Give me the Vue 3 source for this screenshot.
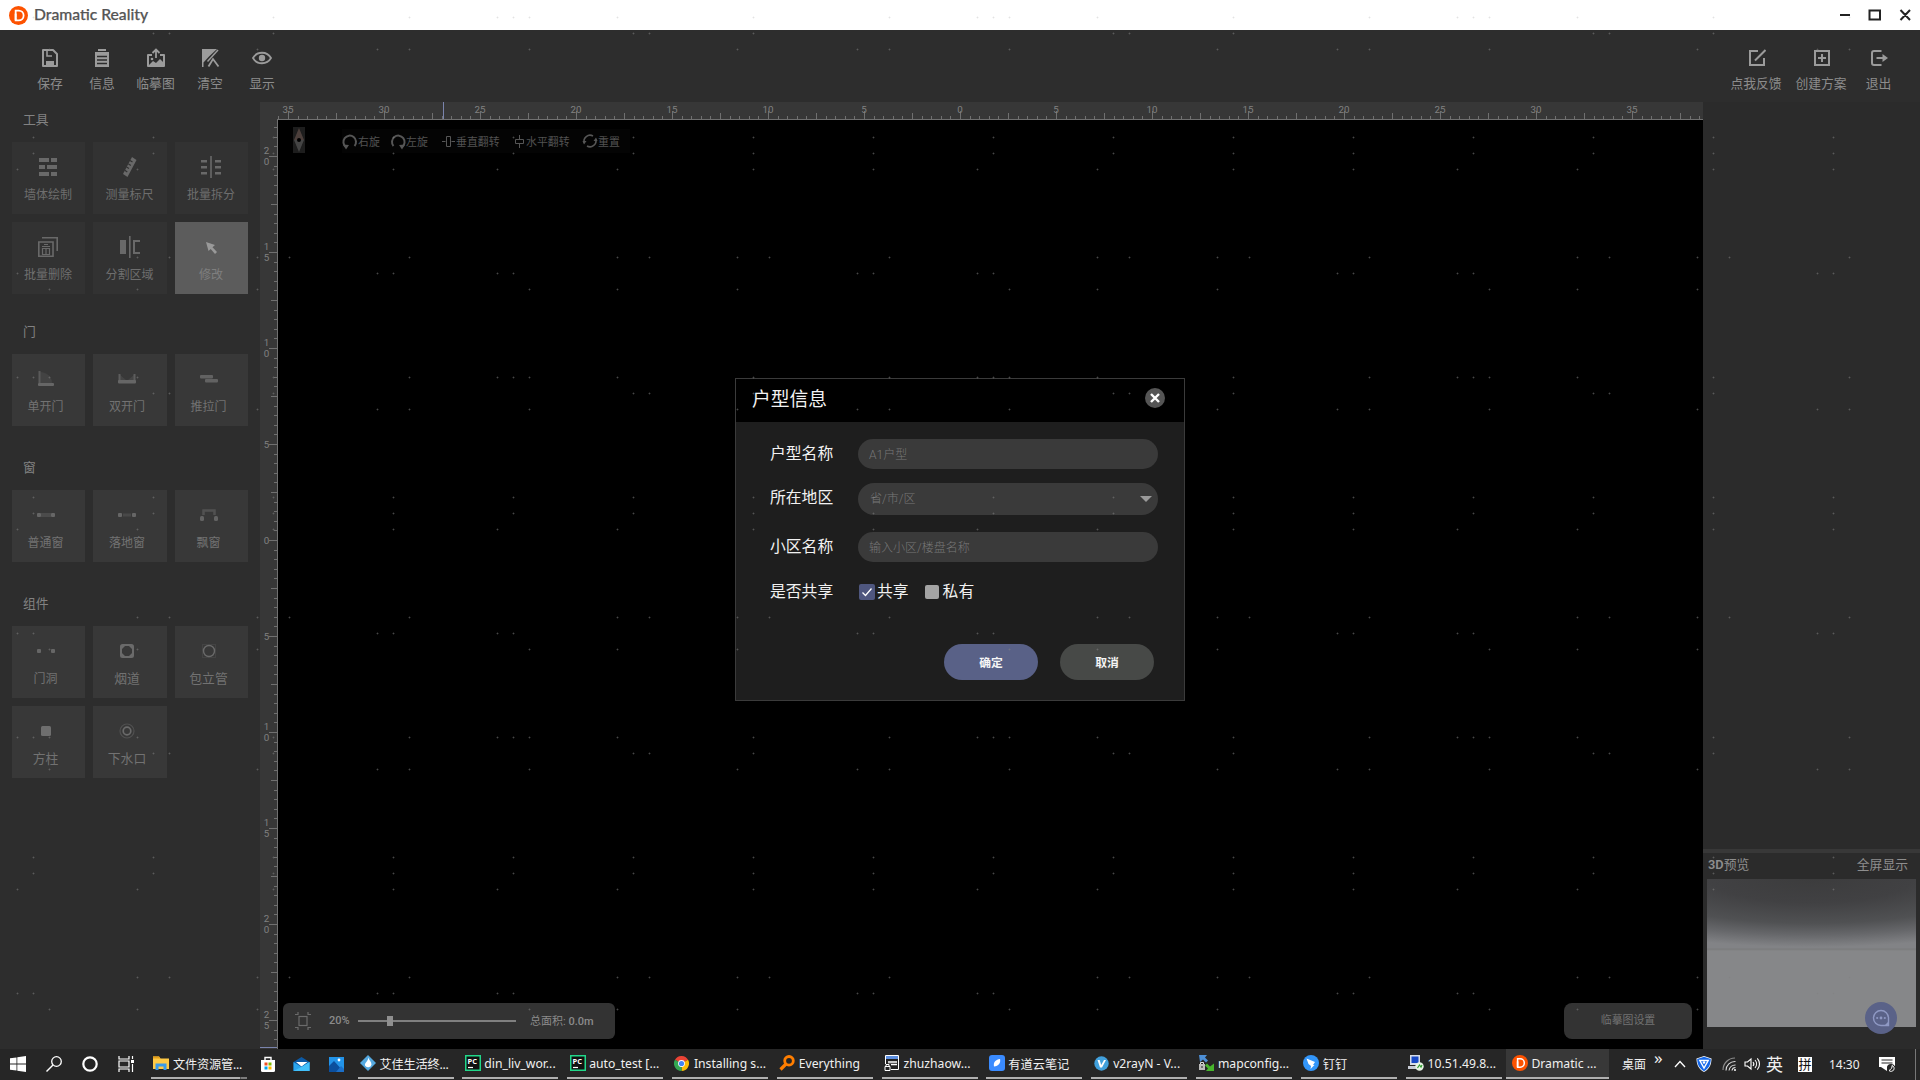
<script setup>
const svg = (w, h, body, vb) =>
  `<svg xmlns="http://www.w3.org/2000/svg" width="${w}" height="${h}" viewBox="${vb || `0 0 ${w} ${h}`}" style="display:block" fill="none">${body}</svg>`

const menuLeft = [
  { label: '保存', w: 52, icon: svg(20, 20, '<path d="M3 2h10l4 4v12H3z" stroke="#9b9b9b" stroke-width="2" stroke-linejoin="round"/><path d="M7 3v5h5" stroke="#9b9b9b" stroke-width="1.6"/><path d="M6 13h8v4H6z" fill="#9b9b9b"/>') },
  { label: '信息', w: 52, icon: svg(20, 20, '<path d="M6 1h8v2H6zM3 4h14v15H3z" fill="#9b9b9b"/><path d="M5 8.5h10M5 12h10M5 15.5h10" stroke="#2d2d2d" stroke-width="1.3"/>') },
  { label: '临摹图', w: 55, icon: svg(20, 20, '<path d="M6 7H2v11h16V7h-4" stroke="#9b9b9b" stroke-width="2" stroke-linejoin="round"/><path d="M10 10V2M6.500 5 10 1.500 13.500 5" stroke="#9b9b9b" stroke-width="1.800"/><path d="M3 17l4-4 3 2 4-4 4 4v3H3z" fill="#9b9b9b"/><circle cx="6" cy="11" r="1.300" fill="#9b9b9b"/>') },
  { label: '清空', w: 54, icon: svg(20, 20, '<path d="M2 1h15L9 8.500 3.500 14.500V19H2z" fill="#9b9b9b"/><path d="M18 2 7.500 13.500" stroke="#9b9b9b" stroke-width="1.500"/><path d="M8.500 18.500 13 11l5.500 7.500" stroke="#9b9b9b" stroke-width="1.800"/>') },
  { label: '显示', w: 50, icon: svg(22, 20, '<path d="M2 10C6 3 16 3 20 10C16 17 6 17 2 10z" stroke="#9b9b9b" stroke-width="1.800"/><circle cx="11" cy="10" r="3.200" fill="#9b9b9b"/>') }
]
const menuRight = [
  { label: '点我反馈', w: 62, icon: svg(20, 20, '<path d="M12 3H4v14h14v-7" stroke="#9b9b9b" stroke-width="2"/><path d="M9 12.500 19.500 2" stroke="#9b9b9b" stroke-width="2"/>') },
  { label: '创建方案', w: 68, icon: svg(20, 20, '<path d="M4 3h14v14H4zM11 6v8M7 10h8" stroke="#9b9b9b" stroke-width="2"/>') },
  { label: '退出', w: 47, icon: svg(20, 20, '<path d="M12.500 3H5a2 2 0 0 0-2 2v10a2 2 0 0 0 2 2h7.500" stroke="#9b9b9b" stroke-width="2"/><path d="M7.500 10h8" stroke="#9b9b9b" stroke-width="2"/><path d="M13.500 6 19 10l-5.500 4z" fill="#9b9b9b"/>') }
]

const c = '#696969'
const groups = [
  {
    title: '工具', kind: 'tool', items: [
      { label: '墙体绘制', icon: svg(20, 20, `<path d="M1 1h10v4H1zM13 1h6v4h-6zM1 8h6v4H1zM9 8h10v4H9zM1 15h10v4H1zM13 15h6v4h-6z" fill="${c}"/>`) },
      { label: '测量标尺', icon: svg(20, 22, `<path d="M12 1 16.500 4 7.500 21 3 18z" fill="${c}"/><path d="M10 4.500l2.500 1.600M8.300 7.800l2.500 1.600M6.500 11l2.500 1.600M4.800 14.300l2.500 1.600" stroke="#323232" stroke-width="1.200"/>`) },
      { label: '批量拆分', icon: svg(22, 22, `<path d="M1 4h6v2.500H1zM1 10h6v2.500H1zM1 16h6v2.500H1zM15 4h6v2.500h-6zM15 10h6v2.500h-6zM15 16h6v2.500h-6zM10.200 0h1.600v22h-1.600z" fill="${c}"/>`) },
      { label: '批量删除', icon: svg(22, 22, `<path d="M5 1.800H20.200V15M1.800 6H16v14.200H1.800z" stroke="${c}" stroke-width="1.600"/><path d="M5 10.500h8M7 8.500h4M5.500 12.500h7v6h-7zM9 13v5" stroke="${c}" stroke-width="1.200"/>`) },
      { label: '分割区域', icon: svg(22, 22, `<path d="M1 4h6v14H1zM10 0h1.600v22H10z" fill="${c}"/><path d="M21 5h-6v12h6" stroke="${c}" stroke-width="2"/>`) },
      { label: '修改', active: true, icon: svg(12, 14, '<path d="M1 2l9 3-2.500 2.200L12 12l-2 2-4.300-5L3.500 11z" fill="#999"/>') }
    ]
  },
  {
    title: '门', kind: 'part', items: [
      { label: '单开门', icon: svg(16, 18, '<path d="M2 2C9 2 14 7 14 13H2z" fill="#434343"/><path d="M.500 1H2.500v12H.500z" fill="#5a5a5a"/><rect x="0" y="13" width="16" height="3" rx="1" fill="#666"/>') },
      { label: '双开门', icon: svg(18, 10, '<path d="M1 0l7 6H1zM17 0l-7 6h7z" fill="#454545"/><path d="M.500 0h2v7h-2zM15.500 0h2v7h-2z" fill="#5d5d5d"/><rect x="0" y="6" width="18" height="3.500" rx="1" fill="#666"/>') },
      { label: '推拉门', icon: svg(18, 8, '<rect x="0" y="0" width="13" height="3.500" rx="1" fill="#626262"/><rect x="5" y="4" width="13" height="3.500" rx="1" fill="#626262"/>') }
    ]
  },
  {
    title: '窗', kind: 'part', items: [
      { label: '普通窗', icon: svg(18, 4, '<rect x="4" y="0" width="10" height="4" fill="#4b4b4b"/><rect width="4" height="4" rx="1" fill="#666"/><rect x="14" width="4" height="4" rx="1" fill="#666"/>') },
      { label: '落地窗', icon: svg(18, 4, '<rect x="5" y=".500" width="8" height="3" fill="#484848"/><rect width="4" height="4" rx="1" fill="#666"/><rect x="14" width="4" height="4" rx="1" fill="#666"/>') },
      { label: '飘窗', icon: svg(18, 12, '<path d="M3.500 6V1.500h11V6" stroke="#515151" stroke-width="2.500"/><rect y="7" width="4" height="5" rx="1.500" fill="#636363"/><rect x="14" y="7" width="4" height="5" rx="1.500" fill="#636363"/>') }
    ]
  },
  {
    title: '组件', kind: 'part', items: [
      { label: '门洞', icon: svg(18, 4, '<rect width="4" height="4" rx="1" fill="#666"/><rect x="14" width="4" height="4" rx="1" fill="#666"/>') },
      { label: '烟道', big: true, icon: svg(14, 14, '<rect x="1" y="1" width="12" height="12" rx="1.500" stroke="#6a6a6a" stroke-width="2"/><path d="M1 1h5L1 6zM13 1v5L8 1zM1 13V8l5 5zM13 13H8l5-5z" fill="#6a6a6a"/>') },
      { label: '包立管', big: true, icon: svg(14, 14, '<rect x=".500" y=".500" width="13" height="13" stroke="#434343"/><circle cx="7" cy="7" r="5.500" stroke="#6a6a6a" stroke-width="1.400"/>') },
      { label: '方柱', big: true, icon: svg(10, 10, '<rect width="10" height="10" rx="1.500" fill="#6e6e6e"/>') },
      { label: '下水口', big: true, icon: svg(16, 16, '<circle cx="8" cy="8" r="7" stroke="#505050" stroke-width="1.200"/><circle cx="8" cy="8" r="3.800" stroke="#6a6a6a" stroke-width="1.700"/>') }
    ]
  }
]

const g = '#565656'
const flips = [
  { label: '右旋', icon: svg(16, 18, `<path d="M4 15A6.300 6.300 0 1 1 12.500 14" stroke="${g}" stroke-width="2"/><path d="M1 12.500l6 .500-3 4.500z" fill="${g}"/>`), w: 48 },
  { label: '左旋', icon: svg(16, 18, `<path d="M12 15A6.300 6.300 0 1 0 3.500 14" stroke="${g}" stroke-width="2"/><path d="M15 12.500l-6 .500 3 4.500z" fill="${g}"/>`), w: 52 },
  { label: '垂直翻转', icon: svg(14, 16, `<path d="M0 8.500h3.500M9.500 8.500H13" stroke="${g}" stroke-width="1"/><path d="M4.500 3.500h4v10h-4z" stroke="${g}" stroke-width="1"/>`), w: 71 },
  { label: '水平翻转', icon: svg(13, 16, `<path d="M6.500 2v4M6.500 11v4" stroke="${g}" stroke-width="1"/><path d="M2.500 6.500h8v4h-8z" stroke="${g}" stroke-width="1"/>`), w: 69 },
  { label: '重置', icon: svg(16, 16, `<path d="M2.300 10A6 6 0 0 1 11 3M13.700 6A6 6 0 0 1 5 13" stroke="${g}" stroke-width="1.600"/><path d="M11.500 8h4l-1.500-3.500zM.500 8h4L2 11.500z" fill="${g}"/>`), w: 48 }
]

const ticks = (n0, n1) => {
  const out = []
  for (let i = n0; i <= n1; i++) {
    out.push({ i, p: i * 9.6, len: i % 10 === 0 ? 8 : i % 5 === 0 ? 6 : 3, label: i % 10 === 0 ? String(Math.abs(i / 2)) : '' })
  }
  return out
}
const hTicks = ticks(-71, 77)
const vTicks = ticks(-43, 52)

const marks = [
  [17, [17, 33, 49, 137, 273, 409]],
  [33, [153, 169, 273]],
  [49, [49, 257, 377, 409]],
  [137, [33, 153, 273, 393]],
  [153, [33, 153, 273, 393]],
  [169, [17, 137, 273, 393]],
  [257, [137, 169, 257, 289, 409]],
  [273, [17, 33, 377, 393]],
  [289, [49, 137, 257]]
].flatMap(([y, xs]) => xs.map(x => ({ x, y })))

const pc = svg(16, 16, '<rect x=".750" y=".750" width="14.500" height="14.500" fill="#111" stroke="#21d789" stroke-width="1.500"/><text x="2.500" y="9" font-family="Open Sans, sans-serif" font-weight="700" font-size="7.500" fill="#fff">PC</text><path d="M3 12.500h5" stroke="#fff" stroke-width="1.200"/>')
const dLogo = s => svg(s, s, '<circle cx="10" cy="10" r="10" fill="#fd5200"/><path d="M7 4.800h3.200a5.200 5.200 0 0 1 0 10.400H7z" stroke="#fff" stroke-width="1.900"/><path d="M7 8v7" stroke="#fff" stroke-width="2"/>', '0 0 20 20')

const shell = [
  svg(16, 16, '<path d="M0 2.300 6.500 1.400V7.600H0zM7.300 1.300 16 0V7.600H7.300zM0 8.400h6.500v6.200L0 13.700zM7.300 8.400H16V16l-8.700-1.300z" fill="#fff"/>'),
  svg(16, 16, '<circle cx="10.500" cy="5.500" r="4.800" stroke="#fff" stroke-width="1.300"/><path d="M7 9 .500 15.500" stroke="#fff" stroke-width="1.400"/>'),
  svg(16, 16, '<circle cx="8" cy="8" r="6.700" stroke="#fff" stroke-width="2.200"/>'),
  svg(17, 16, '<path d="M1 0v3h10V0M1 16v-3h10v3M1 5h10v6H1zM14.500 0v3M14.500 8v8" stroke="#fff" stroke-width="1.200"/><path d="M13 4h3v3h-3z" fill="#fff"/>')
]
const explorer = { label: '文件资源管...', icon: svg(16, 16, '<path d="M0 1.500h6l1.500 2H16V14H0z" fill="#ffca45"/><path d="M0 1.500h6l1.500 2H0z" fill="#e39e1a"/><path d="M2.500 15V8.500h11V15h-3v-3.500h-5V15z" fill="#3a9ae8"/>') }
const pinned = [
  svg(16, 17, '<path d="M5 4V1.500h6V4" stroke="#fff" stroke-width="1.400"/><path d="M1 4h14v10.500a1.500 1.500 0 0 1-1.500 1.500h-11A1.500 1.500 0 0 1 1 14.500z" fill="#fff"/><path d="M4.500 6.500h3v3h-3z" fill="#f25022"/><path d="M8.500 6.500h3v3h-3z" fill="#7fba00"/><path d="M4.500 10.500h3v3h-3z" fill="#00a4ef"/><path d="M8.500 10.500h3v3h-3z" fill="#ffb900"/>'),
  svg(17, 16, '<path d="M.500 6 8.500 1l8 5v9H.500z" fill="#0c59a4"/><path d="M3 6h11.500L8.500 10.500z" fill="#fff"/><path d="M.500 6l8 5 8-5v9H.500z" fill="#2aa5ee"/><path d="M.500 15l8-4 8-5v9z" fill="#42c0fa"/>'),
  svg(15, 15, '<rect width="15" height="15" fill="#2293e8"/><path d="M0 15V9l5-5 10 11z" fill="#0b4f9e"/><path d="M7 15l5-6 3 3v3z" fill="#1b6fc9"/><circle cx="10" cy="3" r="1.400" fill="#fff"/>')
]
const tasks = [
  { label: '艾佳生活终...', icon: svg(16, 16, '<path d="M8 0l8 8-8 8-8-8z" fill="#55a9e0"/><path d="M8.500 2.500c.500 3 3 4 3 7A3.500 3.500 0 0 1 5 10.500c-.500-3 3-4 3.500-8z" fill="#fff"/>') },
  { label: 'din_liv_wor...', icon: pc },
  { label: 'auto_test [...', icon: pc },
  { label: 'Installing s...', icon: svg(15, 15, '<path d="M7.500 7.500 1 3.750A7.500 7.500 0 0 1 14 3.750z" fill="#ea4335"/><path d="M7.500 7.500 14 3.750A7.500 7.500 0 0 1 7.500 15z" fill="#fbbc05"/><path d="M7.500 7.500V15A7.500 7.500 0 0 1 1 3.750z" fill="#34a853"/><circle cx="7.500" cy="7.500" r="3.400" fill="#fff"/><circle cx="7.500" cy="7.500" r="2.600" fill="#4285f4"/>') },
  { label: 'Everything', icon: svg(16, 16, '<circle cx="10" cy="5.800" r="4.300" stroke="#ff7e00" stroke-width="2.800"/><path d="M7 9 1.500 14.500" stroke="#ff7e00" stroke-width="3.200"/>') },
  { label: 'zhuzhaow...', icon: svg(16, 16, '<path d="M1.500 .500h13v14h-13z" fill="#222" stroke="#fff"/><path d="M2 1h12v3H2z" fill="#5c8fe0"/><path d="M4 7h9M4 9.500h9" stroke="#fff" stroke-width="1.400"/><path d="M0 9h7v7H0z" fill="#222"/><path d="M1 11.500h5v4H1zM2 11.500v-2h3v2" stroke="#fff"/>') },
  { label: '有道云笔记', icon: svg(16, 16, '<rect width="16" height="16" rx="3" fill="#3a8bff"/><path d="M5 11.500C4 7 7 4.500 11 4c1 4-1.500 7-6 7.500z" fill="#fff"/>') },
  { label: 'v2rayN - V...', icon: svg(15, 15, '<circle cx="7.500" cy="7.500" r="7.200" fill="#41a0dc"/><path d="M3.500 4h2.200l1.500 5L10 4h2L8 11.500H6z" fill="#fff"/>') },
  { label: 'mapconfig...', icon: svg(16, 16, '<path d="M1 0h8L7 2.500l3 3-2 2-3-3L2 7z" fill="#4d8fd6"/><path d="M16 16H8l2-2.500-3-3 2-2 3 3 4-3z" fill="#46b52c"/><path d="M1 9h6v6H1z" fill="#bbb"/><path d="M2.500 9V7.500h3V9" stroke="#ddd"/><path d="M3.500 11h1v2h-1z" fill="#222"/>') },
  { label: '钉钉', icon: svg(16, 16, '<circle cx="8" cy="8" r="8" fill="#3296fa"/><path d="M3.500 3.500l8.500 3.500-2 3h1.500L7.500 14l.500-3L5.500 9z" fill="#fff"/>') },
  { label: '10.51.49.8...', icon: svg(16, 16, '<path d="M2 0h10v10H2z" fill="#d7dde8"/><path d="M3.500 1.500h7v6.500h-7z" fill="#1849c6"/><path d="M0 11h9v3H0z" fill="#c8ccd6"/><circle cx="11.500" cy="11.500" r="4.200" fill="#e8f4e4"/><path d="M9.500 13l2-3 1.500 2 1-2" stroke="#2f9c2f" stroke-width="1.200"/>') },
  { label: 'Dramatic ...', active: true, icon: dLogo(16) }
]
const tray = {
  up: svg(12, 8, '<path d="M1 7l5-5.500L11 7" stroke="#fff" stroke-width="1.300"/>'),
  shield: svg(16, 16, '<path d="M8 0l7.500 2.500C15.500 9 13 13.500 8 16 3 13.500.500 9 .500 2.500z" fill="#fff"/><path d="M8 .800l6.800 2.300C14.800 9 12.300 13 8 15.200 3.700 13 1.200 9 1.200 3.100z" fill="#1668e8"/><path d="M3.800 4.500h8.400L8 12z" stroke="#fff" stroke-width="1.400"/><circle cx="8" cy="6.500" r="1.200" fill="#fff"/>'),
  wifi: svg(14, 14, '<path d="M1 13A12 12 0 0 1 13 1" stroke="#8b8b8b" stroke-width="1.200"/><path d="M4 13.500A9 9 0 0 1 13.500 4.500M7 13.500A6.500 6.500 0 0 1 13.500 8M10 13.500a3.500 3.500 0 0 1 3.500-3" stroke="#ddd" stroke-width="1.100"/><circle cx="13" cy="13" r="1" fill="#fff"/>'),
  sound: svg(17, 14, '<path d="M1 5h2.500L7 2v10L3.500 9H1z" stroke="#fff" stroke-width="1.100"/><path d="M9 5a3 3 0 0 1 0 4M11 3a6 6 0 0 1 0 8M13.300 1.300a8.500 8.500 0 0 1 0 11.400" stroke="#fff" stroke-width="1.100"/>'),
  note: svg(16, 15, '<path d="M0 0h16v9H9l-2 3v-2H0z" fill="#fff"/><path d="M2.500 3h11M2.500 6h11" stroke="#262626" stroke-width="1.200"/><path d="M2 10h6v4z" fill="#fff"/><circle cx="12" cy="11" r="4" fill="#262626"/><path d="M10 13.500a3 3 0 1 0 3-5c.500 2-1 4-3 5z" stroke="#fff"/>')
}
</script>

<template>
  <div class="screen">
    <header class="titlebar">
      <span class="logo" v-html="dLogo(19)"></span>
      <span class="app-name">Dramatic Reality</span>
      <svg class="win" width="72" height="14" viewBox="0 0 72 14" fill="none" stroke="#222" stroke-width="2">
        <path d="M1 7h10M30.500 2.500h10.500v9H30.500zM61.500 2l9.500 10M71 2l-9.500 10" />
      </svg>
    </header>

    <nav class="menubar">
      <div v-for="m in menuLeft" :key="m.label" class="menu-item" :style="{ width: m.w + 'px' }">
        <span class="menu-icon" v-html="m.icon"></span><span>{{ m.label }}</span>
      </div>
      <div class="grow"></div>
      <div v-for="m in menuRight" :key="m.label" class="menu-item" :style="{ width: m.w + 'px' }">
        <span class="menu-icon" v-html="m.icon"></span><span>{{ m.label }}</span>
      </div>
    </nav>

    <main class="work">
      <aside class="sidebar">
        <section v-for="grp in groups" :key="grp.title" :class="['group', grp.kind]">
          <h3>{{ grp.title }}</h3>
          <div class="cards">
            <div v-for="it in grp.items" :key="it.label" :class="['card', { active: it.active, big: it.big }]">
              <span class="card-icon" v-html="it.icon"></span>
              <span class="card-label">{{ it.label }}</span>
            </div>
          </div>
        </section>
      </aside>

      <section class="center">
        <svg class="ruler-top" width="1443" height="18" viewBox="260 102 1443 18">
          <g transform="translate(960 0)">
            <rect v-for="t in hTicks" :key="t.i" :x="Math.round(t.p)" :y="119 - t.len" width="1" :height="t.len" fill="#707070" />
            <template v-for="t in hTicks" :key="t.i">
              <text v-if="t.label" :x="t.p" y="113" text-anchor="middle" class="num">{{ t.label }}</text>
            </template>
          </g>
          <rect x="277" y="119" width="1426" height="1" fill="#707070" />
          <rect x="443" y="102" width="1" height="17" fill="#7a84ad" />
        </svg>
        <div class="below">
          <svg class="ruler-left" width="18" height="929" viewBox="260 120 18 929">
            <g transform="translate(0 540)">
              <rect v-for="t in vTicks" :key="t.i" :x="277 - t.len" :y="Math.round(t.p)" :width="t.len" height="1" fill="#707070" />
              <template v-for="t in vTicks" :key="t.i">
                <template v-if="t.label">
                  <text v-for="(d, k) in t.label.split('')" :key="k" x="266.500" :y="t.p + 3.500 + (t.label.length > 1 ? k * 11 - 5.500 : 0)" text-anchor="middle" class="num">{{ d }}</text>
                </template>
              </template>
            </g>
            <rect x="277" y="119" width="1" height="930" fill="#707070" />
            <rect x="260" y="1047" width="17" height="1" fill="#7a84ad" />
          </svg>
          <div class="canvas">
            <div class="canvas-tools">
              <svg class="compass" width="12" height="26" viewBox="0 0 12 26">
                <rect width="12" height="26" fill="#1d1d1d" />
                <path d="M6 1l5 12H1z" fill="#4c3f3b" /><path d="M6 25l5-12H1z" fill="#444" />
                <circle cx="6" cy="13" r="2" fill="#000" />
              </svg>
              <div class="flips">
                <span v-for="f in flips" :key="f.label" class="flip" :style="{ width: f.w + 'px' }"><i v-html="f.icon"></i>{{ f.label }}</span>
              </div>
            </div>
            <div class="canvas-foot">
              <div class="zoombar">
                <svg width="18" height="18" viewBox="0 0 18 18" fill="none" stroke="#6b6b6b" stroke-width="1.200">
                  <rect x="5" y="4.500" width="8" height="9" />
                  <path d="M4 0v2.500H1M14 0v2.500h3M4 18v-2.500H1M14 18v-2.500h3" />
                </svg>
                <b class="pct">20%</b>
                <div class="slider"><i></i></div>
                <span class="area">总面积: <b>0.0m</b></span>
              </div>
              <div class="trace">临摹图设置</div>
            </div>
          </div>
        </div>
      </section>

      <aside class="right">
        <div class="preview">
          <div class="preview-head"><span><b>3D</b>预览</span><span>全屏显示</span></div>
          <div class="scene">
            <svg class="chat" width="32" height="32" viewBox="0 0 32 32" fill="none">
              <circle cx="16" cy="16" r="16" fill="#5a6288" />
              <path d="M16 8.500a7.500 7.500 0 1 0 0 15h7.500V16A7.500 7.500 0 0 0 16 8.500z" stroke="#8f99c4" stroke-width="1.400" />
              <path d="M19.500 23.500l4-4v4z" fill="#8f99c4" />
              <circle cx="12.200" cy="16" r="1.100" fill="#8f99c4" /><circle cx="16" cy="16" r="1.400" fill="#8f99c4" /><circle cx="19.800" cy="16" r="1.100" fill="#8f99c4" />
            </svg>
          </div>
        </div>
      </aside>
    </main>

    <footer class="taskbar">
      <span v-for="(s, i) in shell" :key="i" class="shell" v-html="s"></span>
      <div class="task first"><div class="task-in"><i v-html="explorer.icon"></i><span>{{ explorer.label }}</span></div></div>
      <span v-for="(s, i) in pinned" :key="'p' + i" class="pin" v-html="s"></span>
      <div v-for="t in tasks" :key="t.label" :class="['task', { active: t.active }]">
        <div class="task-in"><i v-html="t.icon"></i><span>{{ t.label }}</span></div>
      </div>
      <div class="tray">
        <span class="desk">桌面</span><span class="more">»</span>
        <i class="up" v-html="tray.up"></i><i class="shield" v-html="tray.shield"></i>
        <i class="wifi" v-html="tray.wifi"></i><i class="sound" v-html="tray.sound"></i>
        <span class="lang">英</span><span class="ime">拼</span><span class="clock">14:30</span>
        <i class="note" v-html="tray.note"></i>
        <span class="edge"></span>
      </div>
    </footer>

    <div class="dialog">
      <div class="dlg-head">
        <span>户型信息</span>
        <svg width="20" height="20" viewBox="0 0 20 20"><circle cx="10" cy="10" r="10" fill="#555" /><path d="M6 6l8 8M14 6l-8 8" stroke="#fff" stroke-width="2.400" /></svg>
      </div>
      <div class="dlg-body">
        <div class="row r1"><label>户型名称</label><div class="field">A1户型</div></div>
        <div class="row r2"><label>所在地区</label><div class="field sel">省/市/区<i></i></div></div>
        <div class="row r3"><label>小区名称</label><div class="field">输入小区/楼盘名称</div></div>
        <div class="row r4">
          <label>是否共享</label>
          <span class="check on"><svg width="16" height="16" viewBox="0 0 16 16" fill="none"><path d="M3.500 8.500l3 3L12.500 4.500" stroke="#fff" stroke-width="1.300" /></svg></span><span class="opt">共享</span>
          <span class="check"></span><span class="opt">私有</span>
        </div>
        <div class="btns"><button class="ok">确定</button><button>取消</button></div>
      </div>
    </div>

    <svg class="marks" width="1920" height="1049">
      <defs>
        <pattern id="grid-marks" width="480" height="360" patternUnits="userSpaceOnUse">
          <g v-for="m in marks" :key="m.x + '-' + m.y" fill="#808080">
            <rect :x="m.x - 1" :y="m.y" width="3" height="1" opacity=".2" />
            <rect :x="m.x" :y="m.y - 1" width="1" height="3" opacity=".2" />
            <rect :x="m.x" :y="m.y" width="1" height="1" opacity=".3" />
          </g>
        </pattern>
      </defs>
      <rect y="30" width="1920" height="1019" fill="url(#grid-marks)" />
      <rect width="1920" height="30" fill="url(#grid-marks)" opacity=".4" />
    </svg>
  </div>
</template>

<style>
html, body { background: #000; overflow: hidden; }
</style>

<style scoped>
.screen { position: relative; width: 1920px; height: 1080px; display: flex; flex-direction: column; background: #2d2d2d; font-family: Roboto, "Noto Sans CJK SC", sans-serif; overflow: hidden; }
.screen i { font-style: normal; }
.grow { flex: 1; }
.titlebar { height: 30px; flex: none; box-sizing: border-box; background: #fff; display: flex; align-items: center; padding: 0 9px; }
.app-name { margin: -2px 0 0 6px; flex: 1; font-family: Lato, sans-serif; font-weight: 500; font-size: 15.700px; color: #555; -webkit-text-stroke: .25px #555; }
.menubar { height: 72px; flex: none; box-sizing: border-box; display: flex; padding: 18px 18px 0 24px; }
.menu-item { display: flex; flex-direction: column; align-items: center; font-size: 12.800px; line-height: 18px; color: #8c8c8c; white-space: nowrap; }
.menu-icon { height: 20px; margin-bottom: 7px; }
.work { height: 947px; flex: none; display: flex; }
.sidebar { width: 260px; flex: none; box-sizing: border-box; padding-left: 12px; }
.group h3 { margin: 0; padding-left: 11px; height: 40px; line-height: 35px; font-size: 12.800px; font-weight: 400; color: #828282; }
.group + .group h3 { height: 60px; line-height: 76px; }
.group:nth-child(n + 3) h3 { height: 64px; line-height: 84px; }
.cards { display: grid; grid-template-columns: 73px 74px 73px; gap: 8px; }
.card { height: 72px; box-sizing: border-box; padding: 13px 1px 0 0; background: #323232; display: flex; flex-direction: column; align-items: center; color: #6e6e6e; font-size: 12px; }
.part .card { background: #383838; padding-right: 6px; color: #727272; }
.part .card.big { font-size: 12.800px; }
.card.active { background: #5c5c5c; color: #7f7f7f; }
.card-icon { height: 24px; display: flex; align-items: center; }
.card-label { line-height: 16px; margin-top: 8px; white-space: nowrap; }
.center { width: 1443px; flex: none; display: flex; flex-direction: column; }
.ruler-top, .ruler-left { background: #373737; display: block; flex: none; }
.num { font: 9.800px Roboto, sans-serif; fill: #818181; }
.below { display: flex; }
.canvas { width: 1425px; height: 929px; background: #000; display: flex; flex-direction: column; justify-content: space-between; }
.canvas-tools { display: flex; padding: 7px 0 0 15px; }
.flips { display: flex; margin-left: 37px; height: 27px; align-items: center; }
.flip { display: flex; align-items: center; height: 24px; font-size: 10.900px; color: #525252; background: #040404; white-space: nowrap; }
.canvas-foot { display: flex; justify-content: space-between; padding: 0 11px 10px 5px; }
.zoombar { width: 332px; height: 36px; box-sizing: border-box; padding-left: 11px; border-radius: 6px; background: #333; display: flex; align-items: center; font-size: 11px; color: #8b8b8b; }
.pct { font-weight: 500; width: 29px; margin-left: 17px; margin-top: -2px; }
.slider { width: 158px; height: 2px; background: #808080; margin-right: 14px; position: relative; }
.slider i { position: absolute; left: 29px; top: -4px; width: 6px; height: 10px; background: #8f8f8f; }
.area { margin-top: -2px; }
.area b { font-weight: 500; }
.trace { width: 128px; height: 36px; line-height: 35px; border-radius: 8px; background: #333; color: #727272; text-align: center; font-size: 10.900px; }
.right { flex: 1; display: flex; flex-direction: column; justify-content: flex-end; background: #2b2b2b; }
.preview { height: 200px; box-sizing: border-box; border-top: 4px solid #383838; padding: 0 4px; }
.preview-head { display: flex; justify-content: space-between; height: 26px; line-height: 23px; padding: 0 8px 0 1px; font-size: 12.800px; color: #8e8e8e; }
.preview-head b { font-weight: 600; }
.scene { position: relative; height: 148px; background: linear-gradient(transparent 69px, #7a7b7c 70px, #868789 72px), radial-gradient(ellipse 290px 68px at 50% 0, #3c3c3d 0, #414143 35%, #505153 65%, #66676a 82%, #828386 100%); }
.chat { position: absolute; right: 19px; bottom: -7px; }
.dialog { position: absolute; left: 735px; top: 378px; width: 450px; height: 323px; box-sizing: border-box; border: 1px solid #3b3b3b; background: #1e1e1e; color: #f2f2f2; }
.dlg-head { height: 43px; background: #000; display: flex; justify-content: space-between; padding: 0 19px 0 16px; font-size: 18.800px; line-height: 42px; }
.dlg-head svg { margin-top: 9px; }
.dlg-body { padding: 17px 0 0 34px; }
.row { display: flex; align-items: center; }
.row label { width: 88px; font-size: 15.800px; line-height: 30px; margin-top: -1px; }
.r2 { margin-top: 14px; } .r3 { margin-top: 17px; } .r4 { margin-top: 17px; height: 26px; }
.r2 label { margin-top: -3px; }
.field { width: 300px; height: 30px; box-sizing: border-box; border-radius: 16px; background: #3a3a3a; padding-left: 11px; font-size: 12px; font-weight: 300; line-height: 33px; color: #777; }
.field.sel { height: 32px; line-height: 35px; padding: 0 6px 0 12px; display: flex; justify-content: space-between; align-items: center; }
.sel i { border: 6px solid transparent; border-top-color: #9a9a9a; border-bottom: 0; }
.check { width: 14px; height: 14px; border-radius: 2px; background: #a3a3a3; margin: 0 4px 0 16px; }
.check.on { width: 16px; height: 16px; background: #4f577f; margin: 0 2px 0 1px; }
.opt { font-size: 15.800px; line-height: 24px; margin-top: -1px; }
.btns { display: flex; gap: 22px; padding: 39px 0 0 174px; }
.btns button { width: 94px; height: 36px; border: 0; border-radius: 18px; padding: 0 0 1px; background: #474947; color: #f5f5f5; font: 700 11.800px Roboto, "Noto Sans CJK SC", sans-serif; }
.btns .ok { background: #596187; }
.taskbar { height: 31px; flex: none; background: #262626; display: flex; color: #f0f0f0; font-family: "Noto Sans", "Noto Sans CJK SC", sans-serif; font-size: 12.200px; }
.shell { width: 36px; display: flex; align-items: center; justify-content: center; padding-bottom: 2px; box-sizing: border-box; }
.pin { width: 34.200px; display: flex; align-items: center; justify-content: center; padding-bottom: 1px; box-sizing: border-box; }
.task { width: 104.800px; box-sizing: border-box; padding-left: 4.400px; flex: none; }
.task.first { margin-left: 2.600px; width: 104px; }
.task-in { width: 96px; height: 30px; box-sizing: border-box; border-bottom: 2px solid #b0b0b0; display: flex; align-items: center; padding-left: 2.500px; white-space: nowrap; }
.task.first .task-in { border-image: linear-gradient(90deg, #b0b0b0 87px, #5a5a5a 87px, #5a5a5a 88px, #7d7d7d 88px) 2; }
.task-in i { width: 16px; margin-right: 3.500px; flex: none; }
.task-in span { padding-top: 1px; }
.task.first span, .task:nth-of-type(2) span { letter-spacing: -.2px; }
.task.active { width: 103px; padding: 0; }
.task.active .task-in { width: 103px; padding-left: 6px; background: #383838; }
.tray { display: flex; align-items: center; flex: 1; padding-bottom: 1px; }
.desk { margin-left: 13px; width: 32px; font-size: 12px; }
.more { width: 20px; font-size: 17px; margin-top: -14px; }
.up { width: 22px; } .shield { width: 26px; } .wifi { width: 22px; } .sound { width: 22px; }
.lang { font-size: 17px; width: 32px; margin-top: -2px; }
.ime { width: 14px; height: 15px; line-height: 14px; font-size: 13px; text-align: center; background: #fff; color: #111; margin-right: 17px; }
.clock { width: 50px; font-size: 12px; }
.note { width: 36px; }
.edge { width: 1px; height: 31px; background: #777; }
.marks { position: absolute; left: 0; top: 0; pointer-events: none; }
</style>
